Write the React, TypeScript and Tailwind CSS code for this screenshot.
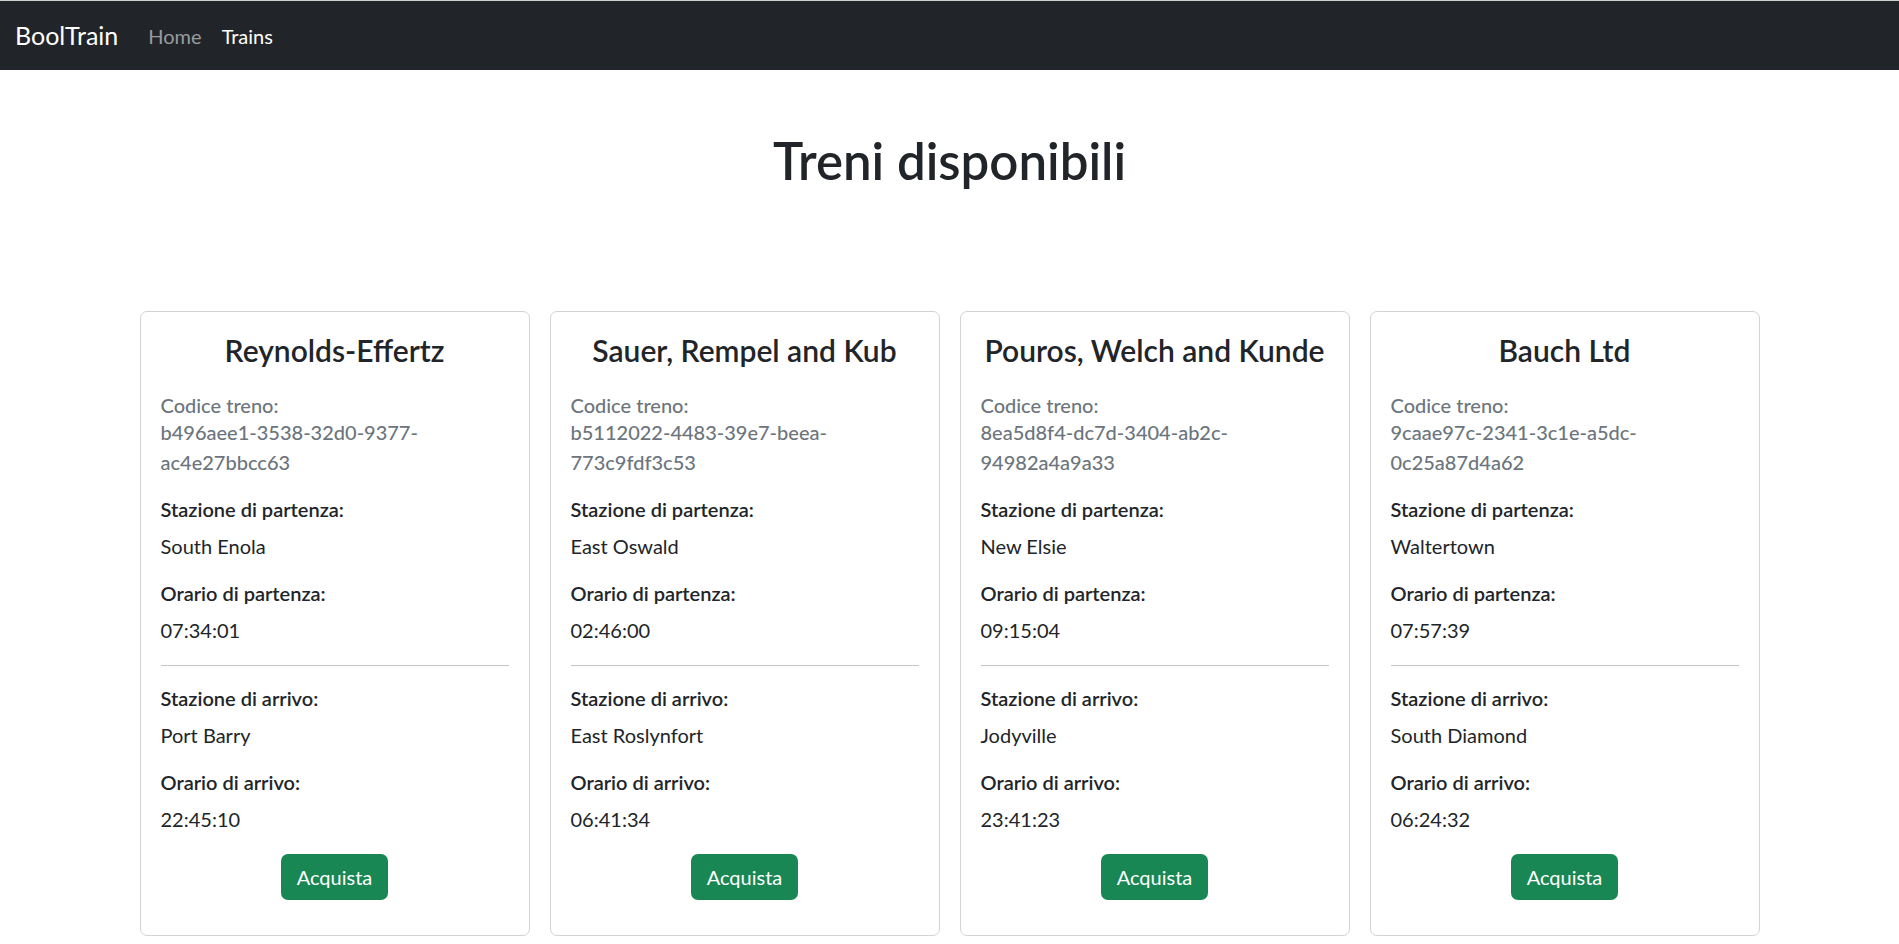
const trains = [
  {
    company: "Reynolds-Effertz",
    code: "b496aee1-3538-32d0-9377-ac4e27bbcc63",
    from: "South Enola",
    departure: "07:34:01",
    to: "Port Barry",
    arrival: "22:45:10",
  },
  {
    company: "Sauer, Rempel and Kub",
    code: "b5112022-4483-39e7-beea-773c9fdf3c53",
    from: "East Oswald",
    departure: "02:46:00",
    to: "East Roslynfort",
    arrival: "06:41:34",
  },
  {
    company: "Pouros, Welch and Kunde",
    code: "8ea5d8f4-dc7d-3404-ab2c-94982a4a9a33",
    from: "New Elsie",
    departure: "09:15:04",
    to: "Jodyville",
    arrival: "23:41:23",
  },
  {
    company: "Bauch Ltd",
    code: "9caae97c-2341-3c1e-a5dc-0c25a87d4a62",
    from: "Waltertown",
    departure: "07:57:39",
    to: "South Diamond",
    arrival: "06:24:32",
  },
];

function Field({ label, value }: { label: string; value: string }) {
  return (
    <>
      <div className="text-[20px] font-semibold leading-[24px] mb-[10px]">{label}</div>
      <div className="leading-[30px] mb-[20px]">{value}</div>
    </>
  );
}

export default function App() {
  return (
    <div className="min-h-screen bg-white text-[#212529] text-[20px] font-['Lato','Noto_Sans',sans-serif]">
      {/* Navbar */}
      <nav className="h-[70px] bg-[#212529] border-t border-[#cfcfcf] flex items-center px-[15px]">
        <span className="text-[25px] text-white leading-[37px] mr-[20px]">BoolTrain</span>
        <a className="px-[10px] text-[#9a9c9f]">Home</a>
        <a className="px-[10px] text-white">Trains</a>
      </nav>

      <h1 className="text-center text-[51px] font-semibold leading-[60px] mt-[61px]">Treni disponibili</h1>

      <div className="max-w-[1620px] mx-auto grid grid-cols-4 gap-5 mt-[120px]">
        {trains.map((t) => (
          <div key={t.code} className="border border-[#d3d3d3] rounded-[7px] px-[20px] pt-[20px] pb-[35px]">
            <h4 className="text-center text-[30px] font-semibold leading-[36px] mb-[25px] whitespace-nowrap">
              {t.company}
            </h4>
            <div className="text-[#6c757d] font-medium">
              <div className="leading-[24px]">Codice treno:</div>
              <div className="leading-[30px] mb-[20px]">{t.code}</div>
            </div>
            <Field label="Stazione di partenza:" value={t.from} />
            <Field label="Orario di partenza:" value={t.departure} />
            <hr className="border-t border-[#c4c4c4] mb-[20px]" />
            <Field label="Stazione di arrivo:" value={t.to} />
            <Field label="Orario di arrivo:" value={t.arrival} />
            <div className="text-center">
              <button className="bg-[#198754] text-white rounded-[7px] px-[16px] py-[8px] leading-[30px]">
                Acquista
              </button>
            </div>
          </div>
        ))}
      </div>
    </div>
  );
}
